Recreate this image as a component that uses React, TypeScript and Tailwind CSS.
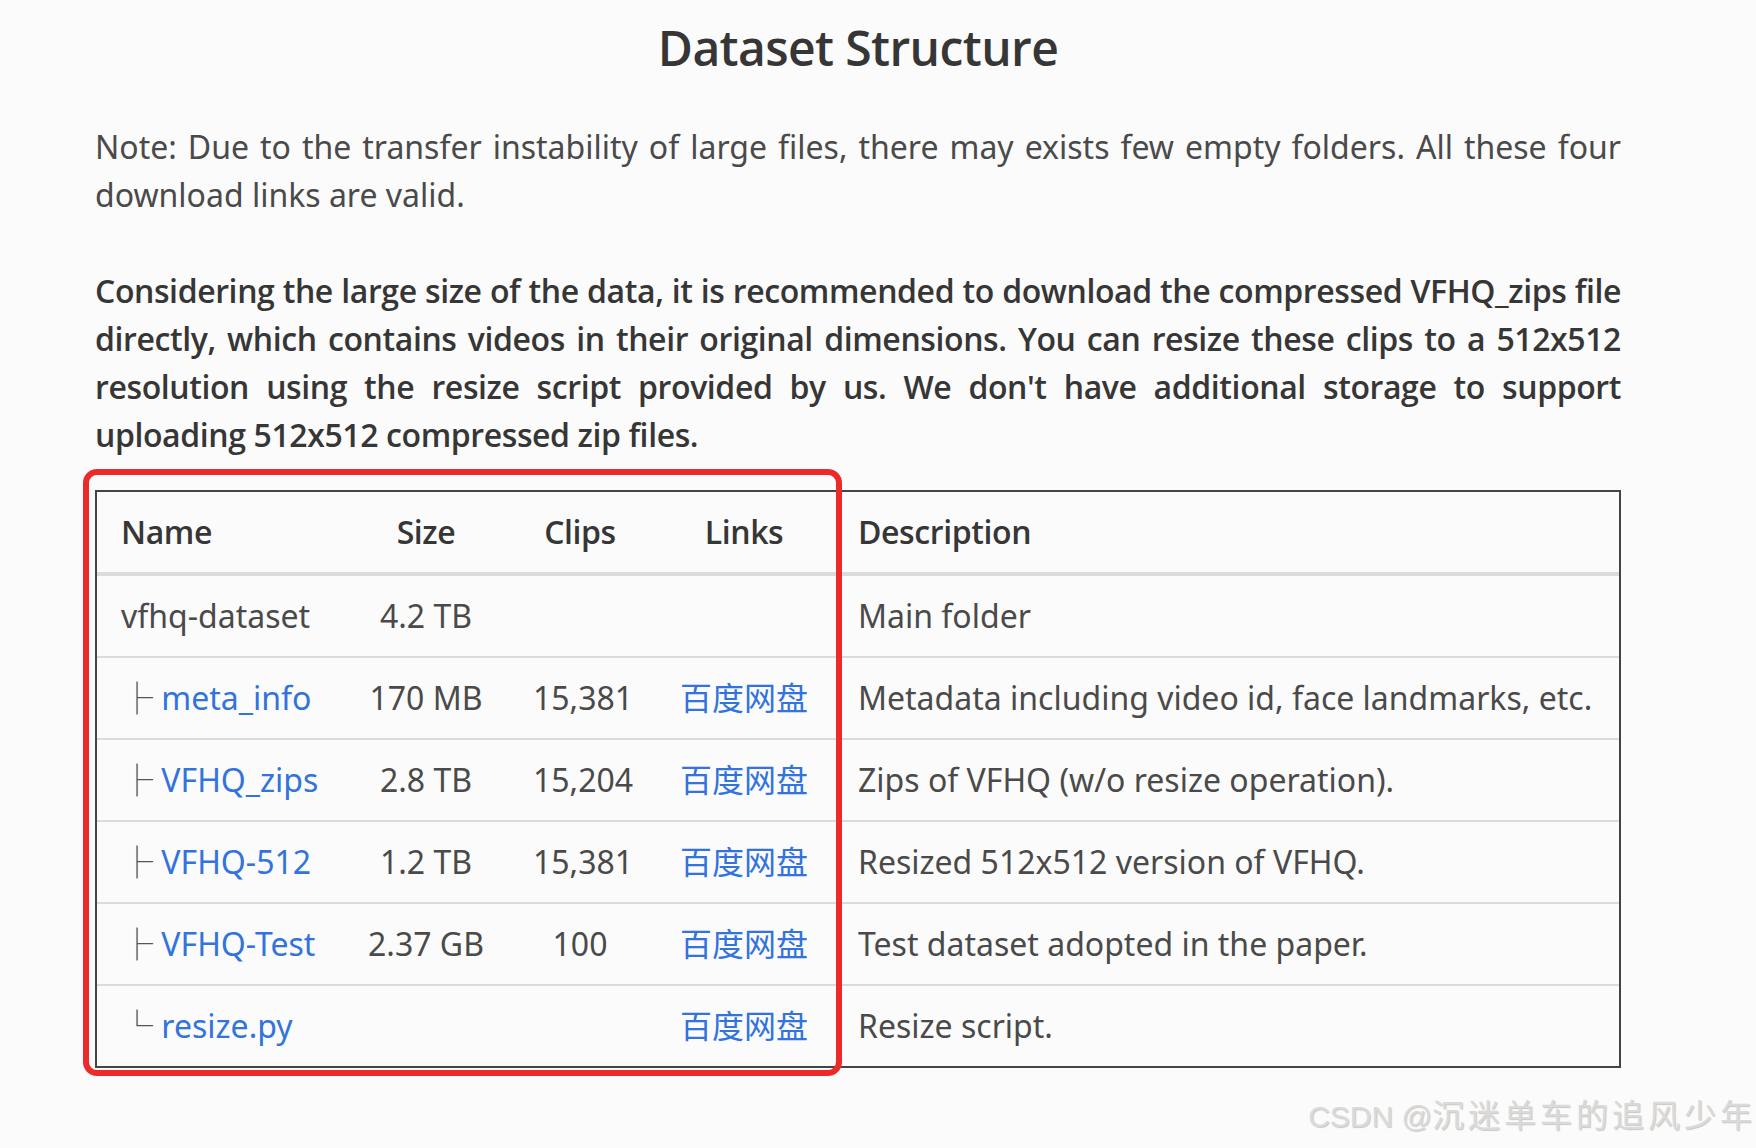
import React from "react";

type Row = {
  tree: string;
  name: string;
  link: boolean;
  size: string;
  clips: string;
  baidu: boolean;
  desc: string;
};

const rows: Row[] = [
  { tree: "", name: "vfhq-dataset", link: false, size: "4.2 TB", clips: "", baidu: false, desc: "Main folder" },
  { tree: "├", name: "meta_info", link: true, size: "170 MB", clips: "15,381", baidu: true, desc: "Metadata including video id, face landmarks, etc." },
  { tree: "├", name: "VFHQ_zips", link: true, size: "2.8 TB", clips: "15,204", baidu: true, desc: "Zips of VFHQ (w/o resize operation)." },
  { tree: "├", name: "VFHQ-512", link: true, size: "1.2 TB", clips: "15,381", baidu: true, desc: "Resized 512x512 version of VFHQ." },
  { tree: "├", name: "VFHQ-Test", link: true, size: "2.37 GB", clips: "100", baidu: true, desc: "Test dataset adopted in the paper." },
  { tree: "└", name: "resize.py", link: true, size: "", clips: "", baidu: true, desc: "Resize script." },
];

const boldLines = [
  "Considering the large size of the data, it is recommended to download the compressed VFHQ_zips file",
  "directly, which contains videos in their original dimensions. You can resize these clips to a 512x512",
  "resolution using the resize script provided by us. We don't have additional storage to support",
  "uploading 512x512 compressed zip files.",
];

const semi = "font-['Open_Sans','Noto_Sans',sans-serif] font-semibold";

export default function App() {
  return (
    <div className="relative w-[1756px] h-[1148px] overflow-hidden bg-[#fbfbfb] text-[#4a4a4a] font-['Noto_Sans','Noto_Sans_CJK_SC',sans-serif]">
      <div className="w-[1621px] pl-[95px] pt-[21px]">
        <h2 className={`text-center text-[48px] leading-[54px] tracking-[-0.6px] text-[#363636] ${semi}`}>
          Dataset Structure
        </h2>
        <p className="mt-[48px] text-[32px] leading-[48px] text-justify">
          Note: Due to the transfer instability of large files, there may exists few empty folders. All these four download links are valid.
        </p>
        <p className={`mt-[48px] text-[32px] leading-[48px] tracking-[-0.4px] text-[#363636] ${semi}`}>
          {boldLines.map((line, i) => (
            <span
              key={i}
              className={
                i < boldLines.length - 1
                  ? "block whitespace-nowrap text-justify [text-align-last:justify] [word-spacing:-3px]"
                  : "block whitespace-nowrap text-left"
              }
            >
              {line}
            </span>
          ))}
        </p>

        <div className="relative mt-[31px]">
          <div className="border-2 border-[#444]">
            <table className="w-full table-fixed border-separate border-spacing-0 text-[32px] leading-[48px]">
              <colgroup>
                <col className="w-[246px]" />
                <col className="w-[166px]" />
                <col className="w-[142px]" />
                <col className="w-[186px]" />
                <col />
              </colgroup>
              <thead>
                <tr>
                  <th className={`h-[84px] px-[24px] py-[16px] text-left tracking-[-0.4px] text-[#363636] border-b-4 border-[#dbdbdb] ${semi}`}>Name</th>
                  <th className={`h-[84px] px-[24px] py-[16px] text-center tracking-[-0.4px] text-[#363636] border-b-4 border-[#dbdbdb] ${semi}`}>Size</th>
                  <th className={`h-[84px] px-[24px] py-[16px] text-center tracking-[-0.4px] text-[#363636] border-b-4 border-[#dbdbdb] ${semi}`}>Clips</th>
                  <th className={`h-[84px] px-[24px] py-[16px] text-center tracking-[-0.4px] text-[#363636] border-b-4 border-[#dbdbdb] ${semi}`}>Links</th>
                  <th className={`h-[84px] pl-[21px] pr-[24px] py-[16px] text-left tracking-[-0.4px] text-[#363636] border-b-4 border-[#dbdbdb] ${semi}`}>Description</th>
                </tr>
              </thead>
              <tbody>
                {rows.map((r, i) => {
                  const last = i === rows.length - 1;
                  const cell = last
                    ? "h-[80px] py-[16px] whitespace-nowrap"
                    : "h-[82px] py-[16px] whitespace-nowrap border-b-2 border-[#dbdbdb]";
                  return (
                    <tr key={i}>
                      <td className={`px-[24px] ${cell}`}>
                        {r.tree ? (
                          <>
                            <span className="font-['Noto_Sans_CJK_SC',sans-serif] leading-none text-[#555]">{r.tree}</span>{" "}
                          </>
                        ) : null}
                        {r.link ? <span className="text-[#3273dc]">{r.name}</span> : r.name}
                      </td>
                      <td className={`px-[24px] text-center ${cell}`}>{r.size}</td>
                      <td className={`px-[24px] text-center ${cell}`}>{r.clips}</td>
                      <td className={`px-[24px] text-center ${cell}`}>
                        {r.baidu ? (
                          <span className="text-[#3273dc] leading-none font-['Noto_Sans_CJK_SC',sans-serif]">百度网盘</span>
                        ) : null}
                      </td>
                      <td className={`pl-[21px] pr-[24px] ${cell}`}>{r.desc}</td>
                    </tr>
                  );
                })}
              </tbody>
            </table>
          </div>
          <div className="pointer-events-none absolute left-[-12px] top-[-21px] w-[759px] h-[607px] rounded-[14px] border-[6px] border-[#ec2a2a]" />
        </div>
      </div>

      <div className="absolute right-[0px] top-[1089px] flex items-baseline text-[#dadada] [text-shadow:1px_1px_1px_rgba(0,0,0,0.2)]">
        <span className="font-['Liberation_Sans',sans-serif] text-[30px]">CSDN @</span>
        <span className="font-['Noto_Sans_CJK_SC',sans-serif] text-[32px] tracking-[4px]">沉迷单车的追风少年</span>
      </div>
    </div>
  );
}
